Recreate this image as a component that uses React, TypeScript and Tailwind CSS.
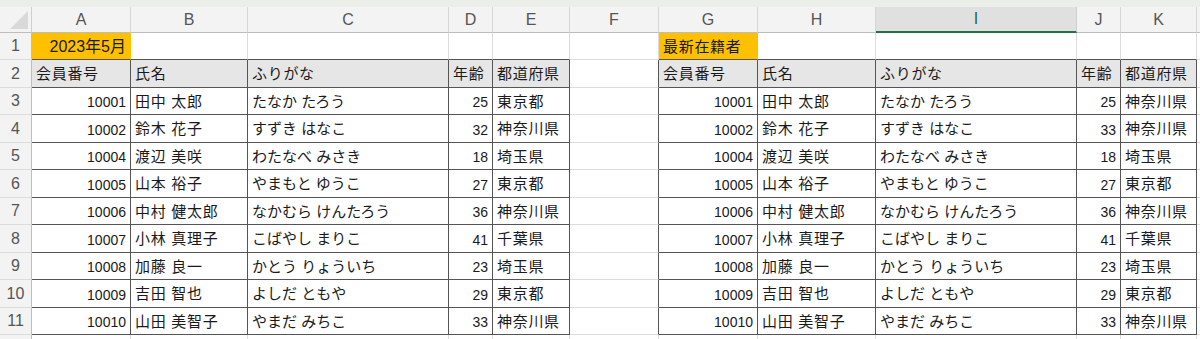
import React from "react";

const cols = ["A", "B", "C", "D", "E", "F", "G", "H", "I", "J", "K", ""];

const rowHeights = ["h-[27px]", "h-[28px]", "h-[27px]", "h-[28px]", "h-[27px]", "h-[28px]", "h-[27px]", "h-[28px]", "h-[27px]", "h-[28px]", "h-[27px]", "h-[27px]"];

type Member = { id: string; name: string; kana: string; age: string; pref: string };

const before: Member[] = [
  { id: "10001", name: "田中 太郎", kana: "たなか たろう", age: "25", pref: "東京都" },
  { id: "10002", name: "鈴木 花子", kana: "すずき はなこ", age: "32", pref: "神奈川県" },
  { id: "10004", name: "渡辺 美咲", kana: "わたなべ みさき", age: "18", pref: "埼玉県" },
  { id: "10005", name: "山本 裕子", kana: "やまもと ゆうこ", age: "27", pref: "東京都" },
  { id: "10006", name: "中村 健太郎", kana: "なかむら けんたろう", age: "36", pref: "神奈川県" },
  { id: "10007", name: "小林 真理子", kana: "こばやし まりこ", age: "41", pref: "千葉県" },
  { id: "10008", name: "加藤 良一", kana: "かとう りょういち", age: "23", pref: "埼玉県" },
  { id: "10009", name: "吉田 智也", kana: "よしだ ともや", age: "29", pref: "東京都" },
  { id: "10010", name: "山田 美智子", kana: "やまだ みちこ", age: "33", pref: "神奈川県" },
];

const latest: Member[] = [
  { id: "10001", name: "田中 太郎", kana: "たなか たろう", age: "25", pref: "神奈川県" },
  { id: "10002", name: "鈴木 花子", kana: "すずき はなこ", age: "33", pref: "神奈川県" },
  { id: "10004", name: "渡辺 美咲", kana: "わたなべ みさき", age: "18", pref: "埼玉県" },
  { id: "10005", name: "山本 裕子", kana: "やまもと ゆうこ", age: "27", pref: "東京都" },
  { id: "10006", name: "中村 健太郎", kana: "なかむら けんたろう", age: "36", pref: "神奈川県" },
  { id: "10007", name: "小林 真理子", kana: "こばやし まりこ", age: "41", pref: "千葉県" },
  { id: "10008", name: "加藤 良一", kana: "かとう りょういち", age: "23", pref: "埼玉県" },
  { id: "10009", name: "吉田 智也", kana: "よしだ ともや", age: "29", pref: "東京都" },
  { id: "10010", name: "山田 美智子", kana: "やまだ みちこ", age: "33", pref: "神奈川県" },
];

const headers = ["会員番号", "氏名", "ふりがな", "年齢", "都道府県"];

// column index 0..11 (A..L), row 1..12
function inTable(c: number) {
  return (c >= 0 && c <= 4) || (c >= 6 && c <= 10);
}

function cellValue(r: number, c: number): { text: string; right: boolean; kana: boolean } {
  if (r === 1) {
    if (c === 0) return { text: "2023年5月", right: true, kana: false };
    if (c === 6) return { text: "最新在籍者", right: false, kana: false };
    return { text: "", right: false, kana: false };
  }
  if (r === 2 && inTable(c)) {
    return { text: headers[c >= 6 ? c - 6 : c], right: false, kana: false };
  }
  if (r >= 3 && r <= 11 && inTable(c)) {
    const m = (c >= 6 ? latest : before)[r - 3];
    const k = c >= 6 ? c - 6 : c;
    const vals = [m.id, m.name, m.kana, m.age, m.pref];
    return { text: vals[k], right: k === 0 || k === 3, kana: k === 2 };
  }
  return { text: "", right: false, kana: false };
}

function Cell({ r, c }: { r: number; c: number }) {
  const table = inTable(c) && r >= 2 && r <= 11;
  const darkRight = table || (c === 5 && r >= 2 && r <= 11);
  const darkBottom = inTable(c) && r >= 1 && r <= 11;
  const orange = r === 1 && (c === 0 || c === 6);
  const head = r === 2 && inTable(c);
  const { text, right, kana } = cellValue(r, c);
  const numeric = right && r >= 3;

  return (
    <div
      className={[
        "flex items-center overflow-hidden whitespace-nowrap border-r border-b",
        darkRight ? "border-r-[#555555]" : orange ? "border-r-[#ffc000]" : "border-r-[#dcdcdc]",
        darkBottom ? "border-b-[#555555]" : "border-b-[#dcdcdc]",
        orange ? "bg-[#ffc000]" : head ? "bg-[#e7e6e6]" : "bg-white",
        right ? "justify-end pr-[4px]" : "justify-start pl-[4px]",
        numeric
          ? "text-[14px] pt-[3px]"
          : kana
            ? "text-[15px] tracking-[0px] pt-[2px]"
            : "text-[15px] tracking-[0.7px] pt-[2px]",
        r === 1 && c === 0 ? "text-[16px] tracking-normal" : "",
        "text-[#1a1a1a]",
      ].join(" ")}
    >
      {text}
    </div>
  );
}

function CornerCell() {
  return (
    <div className="relative bg-[#f3f3f3] border-r border-b border-r-[#cfcfcf] border-b-[#bdbdbd]">
      <svg className="absolute right-[3px] bottom-[3px]" width="18" height="18" viewBox="0 0 18 18">
        <polygon points="18,0 18,18 0,18" fill="#d9d9d9" />
      </svg>
    </div>
  );
}

export default function App() {
  const rows = Array.from({ length: 12 }, (_, i) => i + 1);
  return (
    <div className="w-[1200px] h-[339px] overflow-hidden bg-white font-['Liberation_Sans','Noto_Sans_CJK_JP',sans-serif]">
      <div className="h-[7px] bg-[#eceeea]" />
      <div className="grid grid-cols-[32px_99px_117px_201px_44px_77px_89px_99px_118px_201px_44px_76px_1fr]">
        <CornerCell />
        {cols.map((l, i) =>
          l === "I" ? (
            <div
              key={i}
              className="h-[26px] flex items-center justify-center bg-[#e0e0e0] border-r border-r-[#cfcfcf] border-b-2 border-b-[#217346] text-[16px] text-[#1d6b3f]"
            >
              {l}
            </div>
          ) : (
            <div
              key={i}
              className="h-[26px] flex items-center justify-center bg-[#f3f3f3] border-r border-r-[#d6d6d6] border-b border-b-[#bdbdbd] text-[16px] text-[#555555]"
            >
              {l}
            </div>
          )
        )}
        {rows.map((r) => (
          <React.Fragment key={r}>
            <div
              className={`${rowHeights[r - 1]} flex items-center justify-center bg-[#f3f3f3] border-r border-b border-r-[#bdbdbd] border-b-[#dcdcdc] text-[16px] text-[#555555]`}
            >
              {r <= 11 ? r : ""}
            </div>
            {cols.map((_, c) => (
              <Cell key={c} r={r} c={c} />
            ))}
          </React.Fragment>
        ))}
      </div>
    </div>
  );
}
